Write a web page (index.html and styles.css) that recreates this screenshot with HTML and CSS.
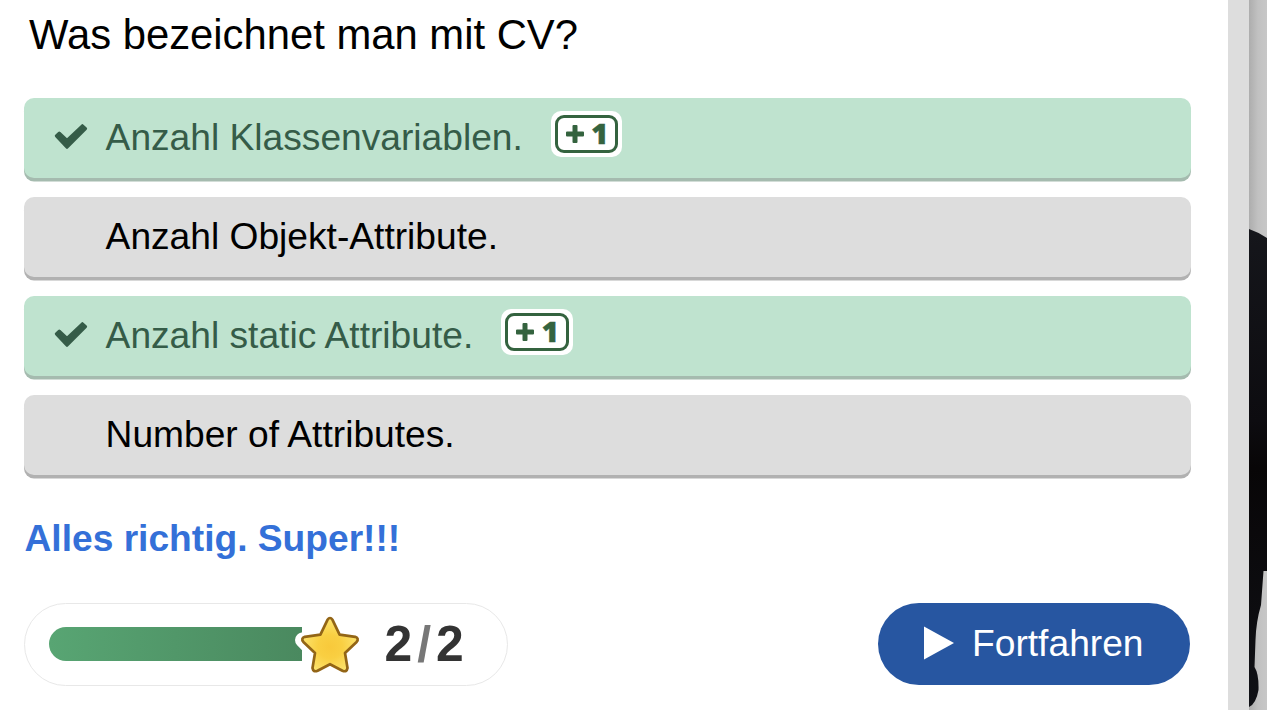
FILE: index.html
```html
<!DOCTYPE html>
<html lang="de">
<head>
<meta charset="utf-8">
<title>Quiz</title>
<link rel="stylesheet" href="styles.css">
</head>
<body>
<div class="stage">
  <main class="quiz">
    <h1 class="question">Was bezeichnet man mit CV?</h1>
    <ul class="answers">
      <li class="answer correct">
        <svg class="check" viewBox="0 0 34 28"><path d="M3.400 11.900 6.300 9.200 14 16.400 29.400 1.800 32.500 4.700 14 23.200Z"/></svg>
        <span class="label">Anzahl Klassenvariablen.</span>
        <span class="point"><span class="point-frame"><svg class="plus" viewBox="0 0 18 18"><path d="M7.500 1H10.500V7.500H17V10.500H10.500V17H7.500V10.500H1V7.500H7.500Z"/></svg><b>1</b></span></span>
      </li>
      <li class="answer"><span class="label">Anzahl Objekt-Attribute.</span></li>
      <li class="answer correct">
        <svg class="check" viewBox="0 0 34 28"><path d="M3.400 11.900 6.300 9.200 14 16.400 29.400 1.800 32.500 4.700 14 23.200Z"/></svg>
        <span class="label">Anzahl static Attribute.</span>
        <span class="point"><span class="point-frame"><svg class="plus" viewBox="0 0 18 18"><path d="M7.500 1H10.500V7.500H17V10.500H10.500V17H7.500V10.500H1V7.500H7.500Z"/></svg><b>1</b></span></span>
      </li>
      <li class="answer"><span class="label">Number of Attributes.</span></li>
    </ul>
    <p class="feedback">Alles richtig. Super!!!</p>
    <footer class="footer">
      <div class="score">
        <div class="bar"></div>
        <svg class="star" viewBox="0 0 70 70">
          <defs>
            <radialGradient id="gold" cx="50%" cy="54%" r="55%">
              <stop offset="0" stop-color="#f8c93b"/><stop offset=".4" stop-color="#f9cf42"/><stop offset="1" stop-color="#fde673"/>
            </radialGradient>
          </defs>
          <path class="halo" d="M35 12 43.500 28.500 62 31 49 44.500 52 63 35 55 18 63 20.800 44.500 7.500 31 26.500 28.500Z"/>
          <path class="body" d="M32.500 10.800Q35 7.200 37.500 10.800L44.600 25.700 60.200 27.800Q64.400 29.300 61.600 32.900L50 44 52.500 59Q51.800 63.500 47.400 61.800L35 55.200 22.600 61.800Q18.200 63.500 17.500 59L20 44 8.400 32.900Q5.600 29.300 9.800 27.800L25.400 25.700Z"/>
        </svg>
        <div class="result"><span>2</span><span class="slash">/</span><span>2</span></div>
      </div>
      <button class="continue"><svg class="play" viewBox="0 0 30 34"><path d="M0 .500 30 17 0 33.500Z"/></svg><span>Fortfahren</span></button>
    </footer>
  </main>
  <div class="edge"></div>
  <svg class="photo" viewBox="0 0 18 710">
    <defs>
      <linearGradient id="wall"><stop offset="0" stop-color="#adadad"/><stop offset=".5" stop-color="#c1c1c1"/><stop offset="1" stop-color="#c7c7c7"/></linearGradient>
      <linearGradient id="cloth" x2="0" y2="1"><stop offset="0" stop-color="#15161b"/><stop offset=".4" stop-color="#0d0c10"/><stop offset=".5" stop-color="#080607"/><stop offset="1" stop-color="#101116"/></linearGradient>
    </defs>
    <rect width="18" height="710" fill="url(#wall)"/>
    <path fill="url(#cloth)" d="M0 229Q9 232 18 238V571H14.500L12 605Q7 622 6.500 640L5.500 667Q10 674 9.500 690 7 704 0 707Z"/>
  </svg>
</div>
</body>
</html>
```
FILE: styles.css
```css
* { box-sizing: border-box; }
body { margin: 0; overflow: hidden; background: #fff; font-family: "Liberation Sans", Arial, sans-serif; }
.stage { display: grid; grid-template-columns: 1228px 21px 18px; height: 710px; }
.quiz { padding: 11px 37px 0 24px; }
.question { margin: 0; padding-left: 5px; font-size: 41.8px; font-weight: 400; line-height: 48px; }
.answers { display: flex; flex-direction: column; gap: 19px; margin: 39px 0 0; padding: 0; list-style: none; }
.answer { display: flex; align-items: center; height: 80px; padding: 0 0 1px 81.6px; border-radius: 10px; background: #ddd; box-shadow: 0 3.5px 0 #b1b1b1; font-size: 37.17px; }
.correct { padding-left: 29px; background: #bfe3cf; box-shadow: 0 3.5px 0 #a5bbaf; color: #355c48; }
.check { width: 34px; height: 28px; margin-right: 18.6px; overflow: visible; fill: #355c48; stroke: #355c48; stroke-width: 3.2; stroke-linejoin: round; }
.point { width: 71.5px; height: 46px; margin: -7px 0 0 28px; padding: 4px; border-radius: 10px; background: #fff; }
.point-frame { display: flex; align-items: center; width: 63.5px; height: 38px; padding-left: 8px; border: 3px solid #34633f; border-radius: 9px; color: #34633f; }
.plus { width: 18px; height: 18px; fill: #34633f; stroke: #34633f; stroke-width: 2; stroke-linejoin: round; }
.point b { margin: -3px 0 0 7.5px; font: 800 29px/32px "Open Sans", sans-serif; -webkit-text-stroke: .5px #34633f; }
.feedback { margin: 42px 0 0; padding-left: .5px; color: #3470d8; font-size: 37.17px; font-weight: 700; line-height: 43px; }
.footer { display: flex; justify-content: space-between; margin-top: 43px; padding-right: 1px; }
.score { display: flex; align-items: center; width: 484px; height: 83px; padding: 0 0 1px 24px; border: 1px solid #e8e8e8; border-radius: 42px; }
.bar { width: 253px; height: 34px; border-radius: 17px 0 0 17px; background: linear-gradient(90deg, #58a573, #4a895f); }
.star { width: 70px; height: 70px; margin: 0 0 0 -7px; }
.halo { fill: #fff; stroke: #fff; stroke-width: 15; stroke-linejoin: round; }
.body { fill: url(#gold); stroke: #936516; stroke-width: 2.7; stroke-linejoin: round; }
.result { display: flex; gap: 5px; margin: -1px 0 0 19.5px; color: #333; font-size: 49.8px; font-weight: 700; line-height: 58px; }
.slash { color: #777; }
.continue { display: flex; align-items: center; width: 312px; height: 82px; padding: 0 0 2px 46px; border: 0; border-radius: 41px; background: #2756a1; color: #fff; font: 37.2px "Liberation Sans", Arial, sans-serif; }
.play { width: 30px; height: 34px; margin-right: 18px; fill: #fff; }
.edge { background: #ddd; }
.photo { display: block; width: 18px; height: 710px; }
```
